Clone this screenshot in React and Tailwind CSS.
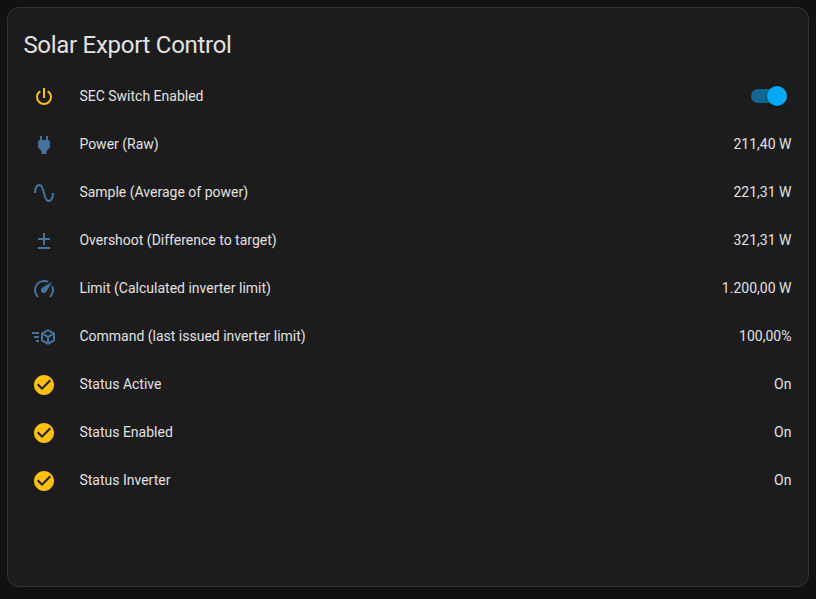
const icons = {
  power:
    'M16.56,5.44L15.11,6.89C16.84,7.94 18,9.83 18,12A6,6 0 0,1 12,18A6,6 0 0,1 6,12C6,9.83 7.16,7.94 8.88,6.88L7.44,5.44C5.36,6.88 4,9.28 4,12A8,8 0 0,0 12,20A8,8 0 0,0 20,12C20,9.28 18.64,6.88 16.56,5.44M13,3H11V13H13',
  plug: 'M16,7V3H14V7H10V3H8V7H8C7,7 6,8 6,9V14.5L9.5,18V21H14.5V18L18,14.5V9C18,8 17,7 16,7Z',
  sine:
    'M16.5,21C13.5,21 12.31,16.76 11.05,12.28C10.14,9.04 9,5 7.5,5C4.11,5 4,11.93 4,12H2C2,11.63 2.06,3 7.5,3C10.5,3 11.71,7.25 12.97,11.74C13.83,14.8 15,19 16.5,19C19.94,19 20.03,12.07 20.03,12H22.03C22.03,12.37 21.97,21 16.5,21Z',
  plusMinus: 'M18,11H13V16H11V11H6V9H11V4H13V9H18V11M6,20V18H18V20H6Z',
  gauge:
    'M12,16A3,3 0 0,1 9,13C9,11.88 9.61,10.9 10.5,10.39L20.21,4.77L14.68,14.35C14.18,15.33 13.17,16 12,16M12,3C13.81,3 15.5,3.5 16.97,4.32L14.87,5.53C14,5.19 13,5 12,5A8,8 0 0,0 4,13C4,15.21 4.89,17.21 6.34,18.65H6.35C6.74,19.04 6.74,19.67 6.35,20.06C5.96,20.45 5.32,20.45 4.93,20.07V20.07C3.12,18.26 2,15.76 2,13A10,10 0 0,1 12,3M22,13C22,15.76 20.88,18.26 19.07,20.07V20.07C18.68,20.45 18.05,20.45 17.66,20.06C17.27,19.67 17.27,19.04 17.66,18.65V18.65C19.11,17.2 20,15.21 20,13C20,12 19.81,11 19.46,10.1L20.67,8C21.5,9.5 22,11.18 22,13Z',
  cubeSend:
    'M16,4L9,8.04V15.96L16,20L23,15.96V8.04M16,6.31L19.8,8.5L16,10.69L12.21,8.5M0,7V9H7V7M11,10.11L15,12.42V17.11L11,14.81M21,10.11V14.81L17,17.11V12.42M2,11V13H7V11M4,15V17H7V15',
  check:
    'M12 2C6.5 2 2 6.5 2 12S6.5 22 12 22 22 17.5 22 12 17.5 2 12 2M10 17L5 12L6.41 10.59L10 14.17L17.59 6.58L19 8L10 17Z',
};

const rows = [
  { icon: 'power', label: 'SEC Switch Enabled', active: true, toggle: true },
  { icon: 'plug', label: 'Power (Raw)', value: '211,40 W' },
  { icon: 'sine', label: 'Sample (Average of power)', value: '221,31 W' },
  { icon: 'plusMinus', label: 'Overshoot (Difference to target)', value: '321,31 W' },
  { icon: 'gauge', label: 'Limit (Calculated inverter limit)', value: '1.200,00 W' },
  { icon: 'cubeSend', label: 'Command (last issued inverter limit)', value: '100,00%' },
  { icon: 'check', label: 'Status Active', value: 'On', active: true },
  { icon: 'check', label: 'Status Enabled', value: 'On', active: true },
  { icon: 'check', label: 'Status Inverter', value: 'On', active: true },
];

function Toggle() {
  return (
    <button
      type="button"
      role="switch"
      aria-checked="true"
      aria-label="SEC Switch Enabled"
      className="mr-[5px] flex h-3.5 w-9 items-center justify-end rounded-full bg-[#0f6792]"
    >
      <span className="size-5 shrink-0 rounded-full bg-[#03a9f4] shadow-[0_1px_3px_rgba(0,0,0,0.4)]" />
    </button>
  );
}

function Row({ icon, label, value, active, toggle }) {
  return (
    <li className="flex h-12 items-center">
      <span className="flex w-10 shrink-0 justify-center pt-0.5">
        <svg viewBox="0 0 24 24" className={active ? 'size-6 fill-[#ffc107]' : 'size-6 fill-[#44739e]'}>
          <path d={icons[icon]} />
        </svg>
      </span>
      <span className="ml-[15.4px] flex-1">{label}</span>
      {toggle ? <Toggle /> : <span className="mr-[0.6px]">{value}</span>}
    </li>
  );
}

export default function App() {
  return (
    <main className="h-screen bg-[#111111] p-[7px] pb-3 font-[Roboto,sans-serif] text-[#e1e1e1]">
      <section className="h-[580px] rounded-xl border border-[#333333] bg-[#1c1c1c] px-4">
        <h1 className="-ml-[0.6px] pt-[13px] text-2xl leading-12 tracking-[-0.012em]">Solar Export Control</h1>
        <ul className="mt-[3px] text-sm leading-5">
          {rows.map((row) => (
            <Row key={row.label} {...row} />
          ))}
        </ul>
      </section>
    </main>
  );
}
